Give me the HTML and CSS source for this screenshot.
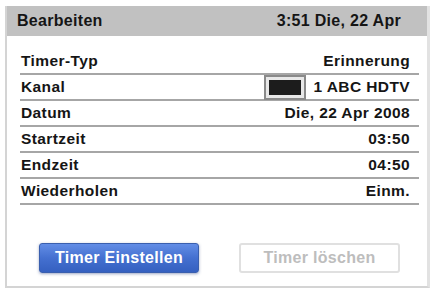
FILE: index.html
```html
<!DOCTYPE html>
<html lang="de">
<head>
  <meta charset="UTF-8">
  <title>Bearbeiten</title>
  <link rel="stylesheet" href="styles.css">
</head>
<body>

<div class="panel">
  <div class="header">
    <span>Bearbeiten</span>
    <span>3:51 Die, 22 Apr</span>
  </div>

  <div class="list">
    <div class="row"><span>Timer-Typ</span><span>Erinnerung</span></div>
    <div class="row">
      <span>Kanal</span>
      <span class="channel"><span class="thumb"><span class="thumb-inner"></span></span>1 ABC HDTV</span>
    </div>
    <div class="row"><span>Datum</span><span>Die, 22 Apr 2008</span></div>
    <div class="row"><span>Startzeit</span><span>03:50</span></div>
    <div class="row"><span>Endzeit</span><span>04:50</span></div>
    <div class="row"><span>Wiederholen</span><span>Einm.</span></div>
  </div>

  <div class="buttons">
    <button class="btn btn-primary">Timer Einstellen</button>
    <button class="btn btn-disabled">Timer löschen</button>
  </div>
</div>

</body>
</html>
```

FILE: styles.css
```css
body {
  margin: 0;
  background: #fff;
  font-family: "Liberation Sans", Arial, sans-serif;
  font-weight: bold;
  color: #151515;
}
.panel {
  margin: 6px 0 0 5px;
  width: 420px;
  height: 280px;
  border-left: 2px solid #d4d4d4;
  border-right: 3px solid #e2e2e2;
  border-bottom: 2px solid #d4d4d4;
  display: flex;
  flex-direction: column;
}
.header {
  height: 30px;
  background: #c1c1c1;
  display: flex;
  justify-content: space-between;
  align-items: center;
  padding: 0 26px 0 10px;
  font-size: 16px;
  letter-spacing: 0.3px;
}
.list {
  margin: 13px 8px 0 13px;
}
.row {
  height: 24px;
  border-bottom: 2px solid #a6a6a6;
  display: flex;
  justify-content: space-between;
  align-items: center;
  padding: 0 9px 0 1px;
  font-size: 15.5px;
  letter-spacing: 0.4px;
}
.channel {
  display: flex;
  align-items: center;
}
.thumb {
  width: 32px;
  height: 15px;
  border: 2px solid #8a8a8a;
  background: #e8e8e8;
  padding: 3px;
  box-sizing: content-box;
  margin-right: 8px;
  display: flex;
}
.thumb-inner {
  flex: 1;
  background: #1c1c1c;
}
.buttons {
  display: flex;
  gap: 40px;
  margin: 38px 0 0 32px;
}
.btn {
  font-family: "Liberation Sans", Arial, sans-serif;
  font-weight: bold;
  letter-spacing: 0.3px;
  height: 30px;
  border-radius: 3px;
  padding: 0;
}
.btn-primary {
  width: 160px;
  font-size: 16px;
  color: #fff;
  border: 1px solid #3a5fae;
  background: linear-gradient(#628de6, #4470d0 50%, #3560c0);
  box-shadow: 0 1px 3px rgba(60, 80, 140, 0.5);
}
.btn-disabled {
  width: 161px;
  font-size: 16px;
  color: #bdbdbd;
  background: #fff;
  border: 2px solid #e0e0e0;
}
```
